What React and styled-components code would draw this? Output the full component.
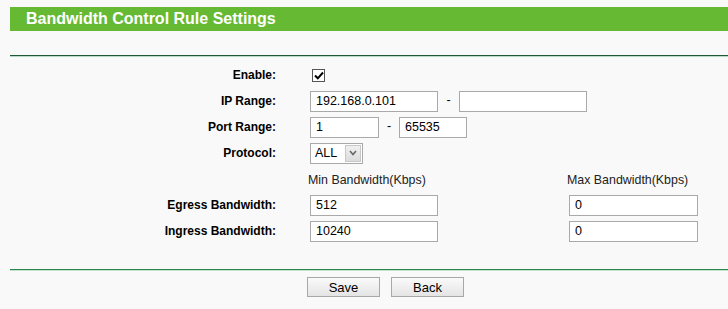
import React from "react";
import styled, { createGlobalStyle } from "styled-components";

const GlobalStyle = createGlobalStyle`
  html, body {
    margin: 0;
    padding: 0;
    background: #f9f9f9;
    font-family: "Liberation Sans", Arial, sans-serif;
  }
`;

const Page = styled.div`
  width: 728px;
  height: 309px;
  padding-top: 7px;
  box-sizing: border-box;
`;

const TitleBar = styled.div`
  margin-left: 10px;
  height: 24px;
  background: #66b933;
  display: flex;
  align-items: center;
  padding-left: 16px;
  color: #fff;
  font-size: 16px;
  font-weight: bold;
`;

const Divider = styled.div`
  margin-left: 10px;
  height: 1px;
  background: ${(p) => p.$color};
  border-bottom: 1px solid ${(p) => p.$shade};
  margin-top: ${(p) => p.$top}px;
`;

const Form = styled.div`
  padding-left: 10px;
  margin-top: 5px;
`;

const Row = styled.div`
  display: grid;
  grid-template-columns: 266px 1fr;
  column-gap: 34px;
  height: 26px;
  align-items: center;
`;

const Label = styled.div`
  text-align: right;
  font-size: 12px;
  font-weight: bold;
  color: #000;
`;

const Field = styled.div`
  display: flex;
  align-items: center;
`;

const Columns = styled.div`
  display: grid;
  grid-template-columns: 259px 129px;
  align-items: center;
`;

const ColHead = styled.div`
  font-size: 12.4px;
  color: #222;
  margin-left: -2px;
  padding-top: 1px;
`;

const TextInput = styled.input`
  box-sizing: border-box;
  width: ${(p) => p.$w}px;
  height: 21px;
  border: 1px solid #a9a9a9;
  background: #fff;
  padding: 0 5px;
  font-family: "Liberation Sans", Arial, sans-serif;
  font-size: 12.5px;
  color: #000;
  outline: none;
`;

const Dash = styled.span`
  width: ${(p) => p.$w}px;
  text-align: center;
  font-size: 12.5px;
  color: #000;
  padding-bottom: 3px;
`;

const Check = styled.span`
  box-sizing: border-box;
  width: 13px;
  height: 13px;
  margin-left: 2px;
  border: 1px solid #555;
  background: #fff;
  display: flex;
  align-items: center;
  justify-content: center;
`;

const Select = styled.div`
  box-sizing: border-box;
  width: 53px;
  height: 21px;
  border: 1px solid #a9a9a9;
  background: #fff;
  display: flex;
  align-items: center;
  justify-content: space-between;
  padding: 1px;
  font-size: 12.5px;
  color: #000;
`;

const SelectText = styled.span`
  padding-left: 3px;
`;

const SelectArrow = styled.span`
  box-sizing: border-box;
  width: 16px;
  height: 17px;
  border: 1px solid #c8c8c8;
  background: linear-gradient(#f0f0f0, #dcdcdc);
  display: flex;
  align-items: center;
  justify-content: center;
`;

const Buttons = styled.div`
  display: flex;
  gap: 11px;
  margin-top: 6px;
  padding-left: 307px;
`;

const Button = styled.button`
  width: 73px;
  height: 20px;
  border: 1px solid #a8a8a8;
  background: linear-gradient(#fafafa, #e4e4e4);
  font-family: "Liberation Sans", Arial, sans-serif;
  font-size: 13px;
  color: #000;
  padding: 0;
  cursor: pointer;
`;

function FormRow({ label, children }) {
  return (
    <Row>
      <Label>{label}</Label>
      <Field>{children}</Field>
    </Row>
  );
}

export default function App() {
  return (
    <Page>
      <GlobalStyle />
      <TitleBar>Bandwidth Control Rule Settings</TitleBar>
      <Divider $color="#1e5a38" $shade="#b9d9c4" $top={24} />
      <Form>
        <FormRow label="Enable:">
          <Check>
            <svg width="10" height="9" viewBox="0 0 10 9">
              <path d="M1 4.5 L3.8 7.3 L9 1.5" fill="none" stroke="#000" strokeWidth="2" />
            </svg>
          </Check>
        </FormRow>
        <FormRow label="IP Range:">
          <TextInput $w={128} defaultValue="192.168.0.101" />
          <Dash $w={21}>-</Dash>
          <TextInput $w={128} defaultValue="" />
        </FormRow>
        <FormRow label="Port Range:">
          <TextInput $w={69} defaultValue="1" />
          <Dash $w={20}>-</Dash>
          <TextInput $w={68} defaultValue="65535" />
        </FormRow>
        <FormRow label="Protocol:">
          <Select>
            <SelectText>ALL</SelectText>
            <SelectArrow>
              <svg width="8" height="6" viewBox="0 0 8 6">
                <path d="M1 1 L4 4.5 L7 1" fill="none" stroke="#666" strokeWidth="1.6" />
              </svg>
            </SelectArrow>
          </Select>
        </FormRow>
        <FormRow label="">
          <Columns>
            <ColHead>Min Bandwidth(Kbps)</ColHead>
            <ColHead>Max Bandwidth(Kbps)</ColHead>
          </Columns>
        </FormRow>
        <FormRow label="Egress Bandwidth:">
          <Columns>
            <TextInput $w={128} defaultValue="512" />
            <TextInput $w={129} defaultValue="0" />
          </Columns>
        </FormRow>
        <FormRow label="Ingress Bandwidth:">
          <Columns>
            <TextInput $w={128} defaultValue="10240" />
            <TextInput $w={129} defaultValue="0" />
          </Columns>
        </FormRow>
      </Form>
      <Divider $color="#25884a" $shade="#c4e2cd" $top={25} />
      <Buttons>
        <Button>Save</Button>
        <Button>Back</Button>
      </Buttons>
    </Page>
  );
}
